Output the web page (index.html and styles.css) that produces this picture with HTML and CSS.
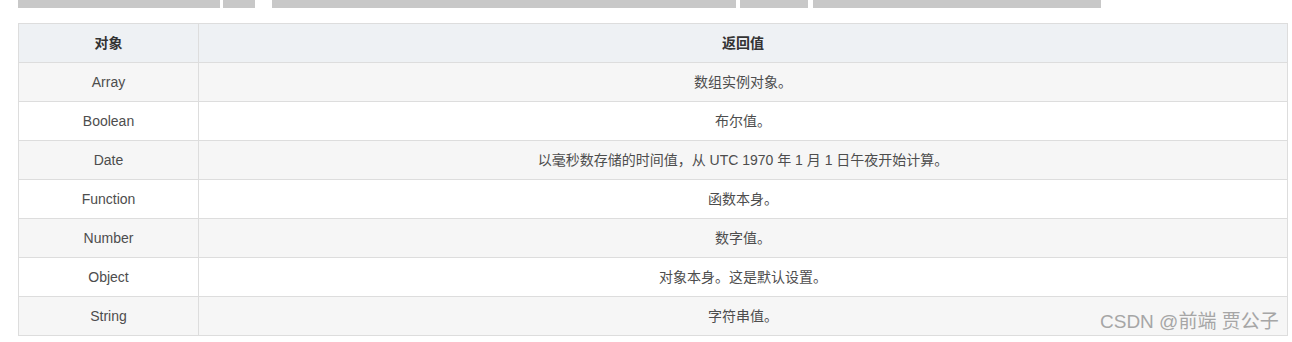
FILE: index.html
```html
<!DOCTYPE html>
<html lang="zh-CN">
<head>
<meta charset="utf-8">
<title>返回值</title>
<link rel="stylesheet" href="styles.css">
</head>
<body>
<div class="strip">
  <span class="hl hl-1"></span>
  <span class="hl hl-2"></span>
  <span class="hl hl-3"></span>
  <span class="hl hl-4"></span>
  <span class="hl hl-5"></span>
</div>
<div class="wrap">
  <table class="vtable">
    <thead>
      <tr><th class="c1">对象</th><th>返回值</th></tr>
    </thead>
    <tbody>
      <tr><td>Array</td><td>数组实例对象。</td></tr>
      <tr><td>Boolean</td><td>布尔值。</td></tr>
      <tr><td>Date</td><td>以毫秒数存储的时间值，从 UTC 1970 年 1 月 1 日午夜开始计算。</td></tr>
      <tr><td>Function</td><td>函数本身。</td></tr>
      <tr><td>Number</td><td>数字值。</td></tr>
      <tr><td>Object</td><td>对象本身。这是默认设置。</td></tr>
      <tr><td>String</td><td>字符串值。</td></tr>
    </tbody>
  </table>
  <div class="watermark">CSDN @前端 贾公子</div>
</div>
</body>
</html>
```
FILE: styles.css
```css
html, body {
  margin: 0;
  padding: 0;
  background: #fff;
}
body {
  font-family: "Liberation Sans", "Noto Sans CJK SC", sans-serif;
  font-size: 14px;
  color: #4d4d4d;
}
.strip {
  display: flex;
  height: 8px;
  padding-left: 18px;
}
.hl {
  display: block;
  height: 8px;
  background: #c8c8c8;
}
.hl-1 { width: 202px; }
.hl-2 { width: 32px; margin-left: 3px; }
.hl-3 { width: 464px; margin-left: 17px; }
.hl-4 { width: 68px; margin-left: 4px; }
.hl-5 { width: 288px; margin-left: 5px; }

.wrap {
  position: relative;
  padding: 15px 0 0 18px;
}
.vtable {
  width: 1270px;
  border-collapse: collapse;
  table-layout: fixed;
}
.vtable th,
.vtable td {
  border: 1px solid #dddddd;
  height: 39px;
  padding: 0 8px;
  text-align: center;
  line-height: 20px;
  box-sizing: border-box;
}
.vtable .c1 { width: 180px; }
.vtable th {
  background: #eef1f4;
  color: #333;
  font-weight: bold;
}
.vtable tbody tr:nth-child(odd) td { background: #f6f6f6; }
.vtable tbody tr:nth-child(even) td { background: #ffffff; }

.watermark {
  position: absolute;
  left: 1100px;
  top: 302px;
  font-family: "Liberation Sans", "Noto Sans CJK SC", sans-serif;
  font-size: 19px;
  line-height: 24px;
  color: #a6a6a6;
  white-space: nowrap;
}
```
